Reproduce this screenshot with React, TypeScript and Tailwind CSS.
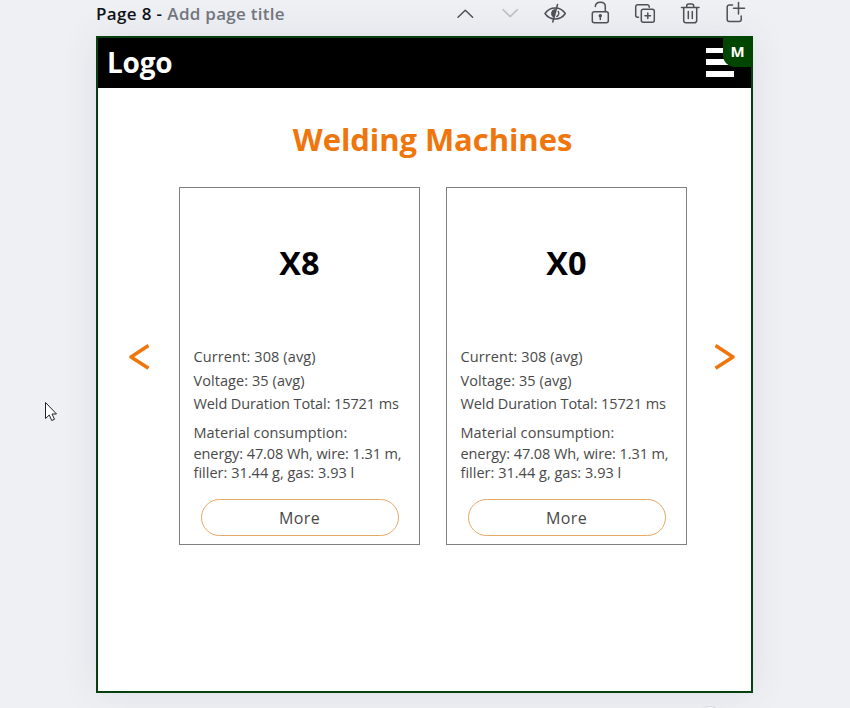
import type { ReactNode } from "react";

function Icon({ children, dim = false }: { children: ReactNode; dim?: boolean }) {
  return (
    <svg
      width="24"
      height="24"
      viewBox="0 0 24 24"
      fill="none"
      stroke={dim ? "#bfc1c5" : "#4d5158"}
      strokeWidth="1.5"
      strokeLinecap="round"
      strokeLinejoin="round"
      className="shrink-0"
    >
      {children}
    </svg>
  );
}

function Toolbar() {
  return (
    <div className="flex h-[26px] items-start gap-[21px] pr-[6px] pt-px">
      <Icon>
        <path d="M5 16.200 12.300 9.200l7.300 7" />
      </Icon>
      <Icon dim>
        <path d="M5 8.600l7.200 7 7.200-7" />
      </Icon>
      <Icon>
        <path d="M2 12.500C4.500 8.800 8 7 12.300 7s7.500 1.800 10 5.500C19.800 16.200 16.300 18 12.300 18S4.500 16.200 2 12.500Z" />
        <path d="M12 8.800a3.800 3.800 0 0 0-1.800 6.700Z" fill="#4d5158" />
        <path d="M15.300 10.500a3.700 3.700 0 0 1-1.500 5" />
        <path d="M14.500 3.500 9.800 21" />
      </Icon>
      <Icon>
        <rect x="4.300" y="10.800" width="16" height="11" rx="2" />
        <path d="M7.300 5.500C7.500 3 9.300 1.300 12.300 1.300s5 1.700 5 4.200v5M12.300 15.500v3" />
        <circle cx="12.300" cy="14.800" r="1" fill="#4d5158" />
      </Icon>
      <Icon>
        <path d="M5.500 16.200h-.8a2 2 0 0 1-2-2V5.700a2 2 0 0 1 2-2h9.500a2 2 0 0 1 2 2v.6" />
        <rect x="8.300" y="8.300" width="13" height="13" rx="2" />
        <path d="M14.800 12v5.500M12 14.700h5.500" />
      </Icon>
      <Icon>
        <path d="M3.500 6.500h17.500M8.700 6.500V5a2 2 0 0 1 2-2h3a2 2 0 0 1 2 2v1.500M5.700 6.500v13a2.300 2.300 0 0 0 2.300 2.300h8.400a2.300 2.300 0 0 0 2.300-2.300v-13M10.300 10.500v7M14.300 10.500v7" />
      </Icon>
      <Icon>
        <path d="M9.500 4H6.200a2 2 0 0 0-2 2v12.500a2 2 0 0 0 2 2h10a2 2 0 0 0 2-2V15M15.500 1.500v11.500M10.500 7.300h11" />
      </Icon>
    </div>
  );
}

function Arrow({ flip = false }: { flip?: boolean }) {
  return (
    <svg
      width="22"
      height="28"
      viewBox="0 0 22 28"
      fill="none"
      stroke="#ef760c"
      strokeWidth="3.6"
      className={flip ? "mt-[156px] shrink-0 -scale-x-100" : "mt-[156px] shrink-0"}
    >
      <path d="M20.500 2.500 3 13.900l17.500 11.400" strokeLinejoin="round" />
    </svg>
  );
}

function MachineCard({ name }: { name: string }) {
  return (
    <article className="flex h-[358px] w-[241px] shrink-0 flex-col border border-[#808080] pl-[13.500px] text-[14.500px] text-[#494949]">
      <h2 className="mt-[51px] h-[48px] w-[212px] text-center text-[32.500px] font-bold leading-[48px] text-black">
        {name}
      </h2>
      <p className="mt-[58px] h-6 whitespace-nowrap leading-6 tracking-[0.120px]">Current: 308 (avg)</p>
      <p className="h-6 whitespace-nowrap leading-6 tracking-[0.070px]">Voltage: 35 (avg)</p>
      <p className="h-[23px] whitespace-nowrap leading-[22px] tracking-[-0.100px]">Weld Duration Total: 15721 ms</p>
      <p className="mt-[6px] h-[22px] whitespace-nowrap leading-[22px] tracking-[0.070px]">Material consumption:</p>
      <p className="h-[19px] whitespace-nowrap leading-5 tracking-[-0.080px]">energy: 47.08 Wh, wire: 1.31 m,</p>
      <p className="h-5 whitespace-nowrap leading-5 tracking-[0.020px]">filler: 31.44 g, gas: 3.93 l</p>
      <button className="ml-[7px] mt-[16px] h-[37px] w-[198px] rounded-full border border-[#e8a866] pt-px text-[16px] leading-[35px] tracking-[0.400px]">
        More
      </button>
    </article>
  );
}

export default function App() {
  return (
    <div className="relative h-[708px] w-[850px] overflow-hidden bg-[#eff0f4] font-['Open_Sans','Noto_Sans',sans-serif]">
      <header className="ml-[96px] flex h-[36px] w-[657px] justify-between">
        <div className="flex gap-[5px] whitespace-nowrap text-[17px] font-semibold leading-[28px]">
          <span className="tracking-[0.350px] text-[#101318]">Page 8 -</span>
          <span className="tracking-[0.280px] text-[#74777d]">Add page title</span>
        </div>
        <Toolbar />
      </header>

      <main className="relative ml-[96px] h-[657px] w-[657px] border-2 border-[#084010] bg-white shadow-[0_0_36px_rgba(60,65,90,0.09)]">
        <nav className="flex h-[50px] items-start justify-between bg-black pl-[9px] pr-[17px]">
          <span className="text-[28px] font-bold leading-[48px] tracking-[-0.200px] text-white">Logo</span>
          <div className="mt-[10px] flex w-[28px] flex-col gap-[6px]">
            <i className="h-[5px] bg-white" />
            <i className="h-[6px] bg-white" />
            <i className="h-[6px] bg-white" />
          </div>
        </nav>
        <div className="absolute -right-[2px] -top-[2px] flex h-[31px] w-[30px] items-center justify-center rounded-bl-[12px] bg-[#004500] pr-px text-[15px] font-bold text-white">
          M
        </div>

        <h1 className="mt-[28px] h-[47px] pl-[16px] text-center text-[31px] font-bold leading-[46px] tracking-[-0.070px] text-[#ef760c]">
          Welding Machines
        </h1>

        <section className="mt-[24px] flex items-start pl-[30px]">
          <Arrow />
          <div className="ml-[29px] mr-[27px] flex gap-[26px]">
            <MachineCard name="X8" />
            <MachineCard name="X0" />
          </div>
          <Arrow flip />
        </section>
      </main>

      <svg className="absolute left-[44px] top-[401px]" width="14" height="22" viewBox="0 0 14 22">
        <path
          d="M1.500 1.500v16l3.800-3.500 2.400 5.500 2.800-1.200L8 13h4.500Z"
          fill="white"
          stroke="#202027"
          strokeLinejoin="round"
        />
      </svg>
      <div className="absolute left-[696px] top-[706px] size-[28px] rounded-full border border-[#d5d6da] bg-white" />
    </div>
  );
}
